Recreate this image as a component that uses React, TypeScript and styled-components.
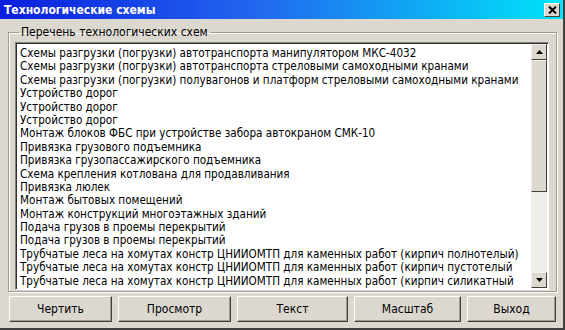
import styled, { createGlobalStyle } from 'styled-components';

const GlobalStyle = createGlobalStyle`
  html, body {
    margin: 0;
    padding: 0;
    background: #dcd8d0;
  }
  body {
    font-family: 'DejaVu Sans Condensed', 'DejaVu Sans', sans-serif;
  }
`;

const Window = styled.div`
  width: 565px;
  height: 330px;
  box-sizing: border-box;
  background: #dcd8d0;
  border-right: 2px solid #404040;
  border-bottom: 2px solid #404040;
  display: flex;
  flex-direction: column;
`;

const TitleBar = styled.div`
  height: 19px;
  display: flex;
  align-items: center;
  justify-content: space-between;
  padding: 0 3px 0 4px;
  background: linear-gradient(to right, #0a1ee0 0%, #2266ee 45%, #00e4fa 100%);
  color: #fff;
  font-weight: bold;
  font-size: 12px;
`;

const CloseButton = styled.div`
  width: 16px;
  height: 14px;
  box-sizing: border-box;
  background: #dcd8d0;
  border: 1px solid;
  border-color: #fff #404040 #404040 #fff;
  display: flex;
  align-items: center;
  justify-content: center;
`;

const Body = styled.div`
  flex: 1;
  display: flex;
  flex-direction: column;
  padding: 6px 6px 0 8px;
`;

const Group = styled.fieldset`
  margin: 0;
  padding: 5px 7px 4px 6px;
  border: 1px solid #a09c94;
  box-shadow: inset 1px 1px 0 #fff, 1px 1px 0 #fff;
  height: 267px;
  box-sizing: border-box;
  display: flex;
  min-width: 0;

  legend {
    font-size: 12px;
    color: #000;
    padding: 0 2px;
    margin-left: 4px;
  }
`;

const ListBox = styled.div`
  flex: 1;
  min-width: 0;
  display: flex;
  background: #fff;
  border: 1px solid;
  border-color: #808080 #fff #fff #808080;
  box-shadow: inset 1px 1px 0 #303030;
  margin-top: -2px;
  height: 248px;
  box-sizing: border-box;
  overflow: hidden;
`;

const Items = styled.div`
  flex: 1;
  min-width: 0;
  padding: 4px 0 0 4px;
  overflow: hidden;
`;

const Item = styled.div`
  font-size: 11.6px;
  line-height: 13.4px;
  height: 13.4px;
  white-space: nowrap;
  color: #000;
`;

const ScrollBar = styled.div`
  width: 16px;
  flex-shrink: 0;
  display: flex;
  flex-direction: column;
  background: #f0eee8;
  margin: 1px 1px 1px 0;
`;

const ArrowButton = styled.div`
  width: 16px;
  height: 16px;
  box-sizing: border-box;
  background: #dcd8d0;
  border: 1px solid;
  border-color: #f4f2ee #404040 #404040 #f4f2ee;
  display: flex;
  align-items: center;
  justify-content: center;
`;

const Thumb = styled.div`
  height: 132px;
  box-sizing: border-box;
  background: #dcd8d0;
  border: 1px solid;
  border-color: #f4f2ee #404040 #404040 #f4f2ee;
`;

const Track = styled.div`
  flex: 1;
`;

const ButtonRow = styled.div`
  display: flex;
  gap: 6px;
  padding: 4px 0 0 1px;
`;

const Button = styled.button<{ w: number }>`
  width: ${({ w }) => w}px;
  height: 26px;
  box-sizing: border-box;
  background: #dcd8d0;
  border: 1px solid;
  border-color: #fff #404040 #404040 #fff;
  box-shadow: inset -1px -1px 0 #a09c94;
  font-family: 'DejaVu Sans Condensed', 'DejaVu Sans', sans-serif;
  font-size: 12px;
  color: #000;
  padding: 0;
`;

const items = [
  'Схемы разгрузки (погрузки) автотранспорта манипулятором МКС-4032',
  'Схемы разгрузки (погрузки) автотранспорта стреловыми самоходными кранами',
  'Схемы разгрузки (погрузки) полувагонов и платформ стреловыми самоходными кранами',
  'Устройство дорог',
  'Устройство дорог',
  'Устройство дорог',
  'Монтаж блоков ФБС при устройстве забора автокраном СМК-10',
  'Привязка грузового подъемника',
  'Привязка грузопассажирского подъемника',
  'Схема крепления котлована для продавливания',
  'Привязка люлек',
  'Монтаж бытовых помещений',
  'Монтаж конструкций многоэтажных зданий',
  'Подача грузов в проемы перекрытий',
  'Подача грузов в проемы перекрытий',
  'Трубчатые леса на хомутах констр ЦНИИОМТП для каменных работ (кирпич полнотелый)',
  'Трубчатые леса на хомутах констр ЦНИИОМТП для каменных работ (кирпич пустотелый',
  'Трубчатые леса на хомутах констр ЦНИИОМТП для каменных работ (кирпич силикатный',
];

const buttons = [
  { text: 'Чертить', w: 103 },
  { text: 'Просмотр', w: 113 },
  { text: 'Текст', w: 111 },
  { text: 'Масштаб', w: 107 },
  { text: 'Выход', w: 89 },
];

const Arrow = ({ up }: { up?: boolean }) => (
  <svg width="7" height="4" viewBox="0 0 7 4">
    <path d={up ? 'M0 4 L3.5 0 L7 4 Z' : 'M0 0 L3.5 4 L7 0 Z'} fill="#000" />
  </svg>
);

export default function App() {
  return (
    <>
      <GlobalStyle />
      <Window>
        <TitleBar>
          <span>Технологические схемы</span>
          <CloseButton>
            <svg width="9" height="8" viewBox="0 0 9 8">
              <path d="M1 0.5 L8 7.5 M8 0.5 L1 7.5" stroke="#000" strokeWidth="2" />
            </svg>
          </CloseButton>
        </TitleBar>
        <Body>
          <Group>
            <legend>Перечень технологических схем</legend>
            <ListBox>
              <Items>
                {items.map((text, i) => (
                  <Item key={i}>{text}</Item>
                ))}
              </Items>
              <ScrollBar>
                <ArrowButton>
                  <Arrow up />
                </ArrowButton>
                <Thumb />
                <Track />
                <ArrowButton>
                  <Arrow />
                </ArrowButton>
              </ScrollBar>
            </ListBox>
          </Group>
          <ButtonRow>
            {buttons.map(({ text, w }) => (
              <Button key={text} w={w}>
                {text}
              </Button>
            ))}
          </ButtonRow>
        </Body>
      </Window>
    </>
  );
}
